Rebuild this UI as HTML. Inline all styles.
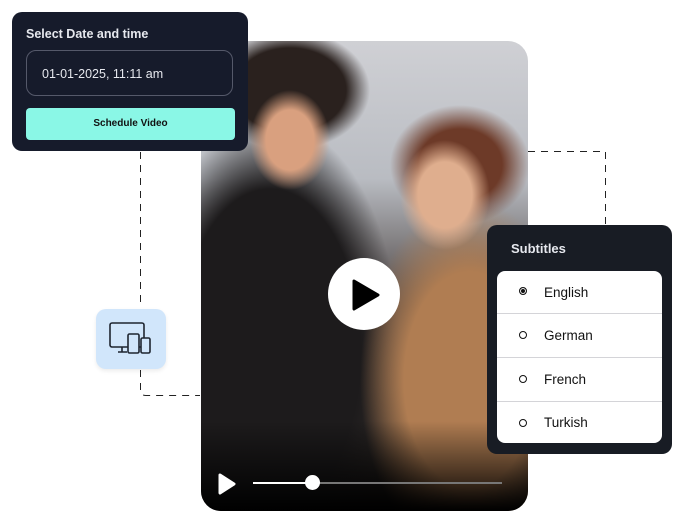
<!DOCTYPE html>
<html><head><style>
body{margin:0;width:681px;height:511px;background:#fff;position:relative;overflow:hidden;font-family:"Liberation Sans",sans-serif}
.abs{position:absolute}
.video{left:201px;top:41px;width:327px;height:470px;border-radius:20px;overflow:hidden;
background:
radial-gradient(ellipse 40px 50px at 290px 140px,#d9a07f 60%,transparent 100%),
radial-gradient(ellipse 45px 55px at 445px 195px,#dfae8e 60%,transparent 100%),
radial-gradient(ellipse 80px 60px at 290px 90px,#2a211e 70%,transparent 100%),
radial-gradient(ellipse 70px 60px at 460px 165px,#6d3a28 60%,transparent 100%),
radial-gradient(ellipse 110px 180px at 470px 380px,#b07d52 60%,transparent 100%),
radial-gradient(ellipse 130px 230px at 270px 350px,#1d1b1c 70%,transparent 100%),
linear-gradient(180deg,#d6d6da 0%,#b9bcc2 35%,#4a4240 60%,#1a1715 100%);
background-attachment:fixed}
.shade{left:0;right:0;bottom:0;height:90px;background:linear-gradient(transparent,#000)}
</style></head><body>
<svg class="abs" style="left:0;top:0" width="681" height="511" fill="none" stroke="#222" stroke-width="1" stroke-dasharray="7 6">
 <path d="M140.5 152 V308"/>
 <path d="M140.5 370 V390 Q140.5 395.5 146 395.5 H200"/>
 <path d="M528 151.5 H605.5 V225"/>
</svg>

<div class="abs video">
 <div class="abs shade"></div>
 <div class="abs" style="left:127px;top:217px;width:72px;height:72px;border-radius:50%;background:#fff"></div>
 <svg class="abs" style="left:150px;top:238px" width="30" height="32"><path d="M3 2 L27 16 L3 30 Z" fill="#000" stroke="#000" stroke-width="3" stroke-linejoin="round"/></svg>
 <svg class="abs" style="left:16px;top:432px" width="20" height="22"><path d="M3 2 L17 11 L3 20 Z" fill="#fff" stroke="#fff" stroke-width="3" stroke-linejoin="round"/></svg>
 <div class="abs" style="left:52px;top:441px;width:249px;height:2px;background:#777"></div>
 <div class="abs" style="left:52px;top:441px;width:60px;height:2px;background:#fff"></div>
 <div class="abs" style="left:104px;top:434px;width:15px;height:15px;border-radius:50%;background:#fff"></div>
</div>

<div class="abs" style="left:12px;top:12px;width:236px;height:139px;background:#161b2b;border-radius:10px">
 <div class="abs" style="left:14px;top:15px;color:#e6e8ee;font-size:12.5px;font-weight:bold">Select Date and time</div>
 <div class="abs" style="left:14px;top:38px;width:207px;height:46px;border:1px solid #55596a;border-radius:10px;box-sizing:border-box"></div>
 <div class="abs" style="left:30px;top:55px;color:#e6e8ee;font-size:12.5px">01-01-2025, 11:11 am</div>
 <div class="abs" style="left:14px;top:96px;width:209px;height:32px;background:#8af7e6;border-radius:4px;text-align:center;line-height:32px;font-size:10px;font-weight:bold;color:#111">Schedule Video</div>
</div>

<div class="abs" style="left:96px;top:309px;width:70px;height:60px;background:#d1e6fb;border-radius:10px;box-shadow:0 2px 4px rgba(0,0,0,.08)">
 <svg class="abs" style="left:12px;top:12px" width="46" height="36" fill="none" stroke="#1e2530" stroke-width="1.6">
  <rect x="2" y="2" width="34" height="24" rx="2"/><path d="M14 26v5M10 31h9"/>
  <rect x="20" y="13" width="11" height="19" rx="1.5" fill="#d1e6fb"/><rect x="33" y="17" width="9" height="15" rx="1.5" fill="#d1e6fb"/>
 </svg>
</div>

<div class="abs" style="left:487px;top:225px;width:185px;height:229px;background:#181c24;border-radius:10px">
 <div class="abs" style="left:24px;top:16px;color:#e6e8ee;font-size:13px;font-weight:bold">Subtitles</div>
 <div class="abs" style="left:10px;top:46px;width:165px;height:172px;background:#fff;border-radius:8px;font-size:13.5px;color:#111">
  <div style="height:42px;border-bottom:1px solid #d4d4d8;position:relative"><span class="abs" style="left:22px;top:16px;width:6px;height:6px;border:1.5px solid #111;border-radius:50%;box-shadow:inset 0 0 0 1px #fff;background:#111"></span><span class="abs" style="left:47px;top:14px">English</span></div>
  <div style="height:43px;border-bottom:1px solid #d4d4d8;position:relative"><span class="abs" style="left:22px;top:17px;width:6px;height:6px;border:1.3px solid #111;border-radius:50%"></span><span class="abs" style="left:47px;top:14px">German</span></div>
  <div style="height:43px;border-bottom:1px solid #d4d4d8;position:relative"><span class="abs" style="left:22px;top:17px;width:6px;height:6px;border:1.3px solid #111;border-radius:50%"></span><span class="abs" style="left:47px;top:14px">French</span></div>
  <div style="height:42px;position:relative"><span class="abs" style="left:22px;top:17px;width:6px;height:6px;border:1.3px solid #111;border-radius:50%"></span><span class="abs" style="left:47px;top:13px">Turkish</span></div>
 </div>
</div>
</body></html>
